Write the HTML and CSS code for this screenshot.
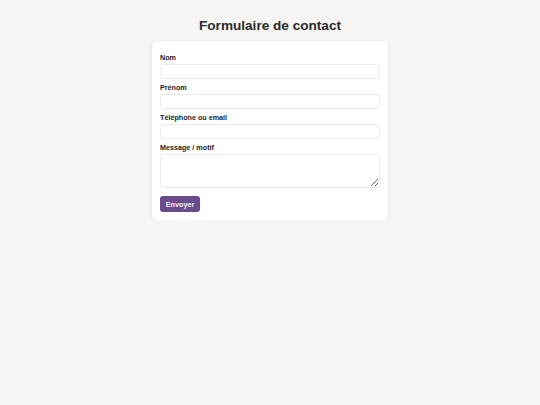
FILE: index.html
```html
<!DOCTYPE html>
<html lang="fr">
<head>
<meta charset="utf-8">
<title>Formulaire de contact</title>
<link rel="stylesheet" href="styles.css">
</head>
<body>
<main class="page">
  <h1 class="title">Formulaire de contact</h1>
  <form class="card">
    <label class="label" for="nom">Nom</label>
    <input class="field" id="nom" type="text">
    <label class="label" for="prenom">Prénom</label>
    <input class="field" id="prenom" type="text">
    <label class="label" for="contact">Téléphone ou email</label>
    <input class="field" id="contact" type="text">
    <label class="label" for="message">Message / motif</label>
    <textarea class="field area" id="message"></textarea>
    <div class="actions"><button class="btn" type="button">Envoyer</button></div>
  </form>
</main>
</body>
</html>
```
FILE: styles.css
```css
html, body {
  margin: 0;
  padding: 0;
  background: #f6f5f3;
  font-family: "Liberation Sans", Arial, sans-serif;
  color: #222;
}
.page {
  display: flex;
  flex-direction: column;
  align-items: center;
  padding-top: 18px;
}
.title {
  margin: 0 0 8px;
  font-size: 13.6px;
  font-weight: 700;
  color: #2a2a2a;
  line-height: normal;
}
.card {
  width: 236px;
  box-sizing: border-box;
  background: #fff;
  border-radius: 5px;
  box-shadow: 0 1px 4px rgba(0, 0, 0, 0.08);
  padding: 13px 8px 8px;
  display: flex;
  flex-direction: column;
}
.label {
  font-size: 7.2px;
  font-weight: 700;
  color: #1e1e1e;
  line-height: 8px;
  margin-bottom: 2px;
}
.field {
  display: block;
  box-sizing: border-box;
  width: 100%;
  height: 15px;
  margin: 0 0 5px;
  padding: 2px 4px;
  border: 1px solid #ececec;
  border-radius: 3px;
  background: #fff;
  font-family: inherit;
  font-size: 7px;
}
.area {
  height: 34px;
  margin-bottom: 8px;
  resize: vertical;
}
.actions {
  display: flex;
}
.btn {
  height: 16px;
  width: 40px;
  padding: 0;
  border: 0;
  border-radius: 3px;
  background: #6a4c8c;
  color: #f3f0f6;
  font-family: inherit;
  font-size: 7.2px;
  font-weight: 700;
}
```
